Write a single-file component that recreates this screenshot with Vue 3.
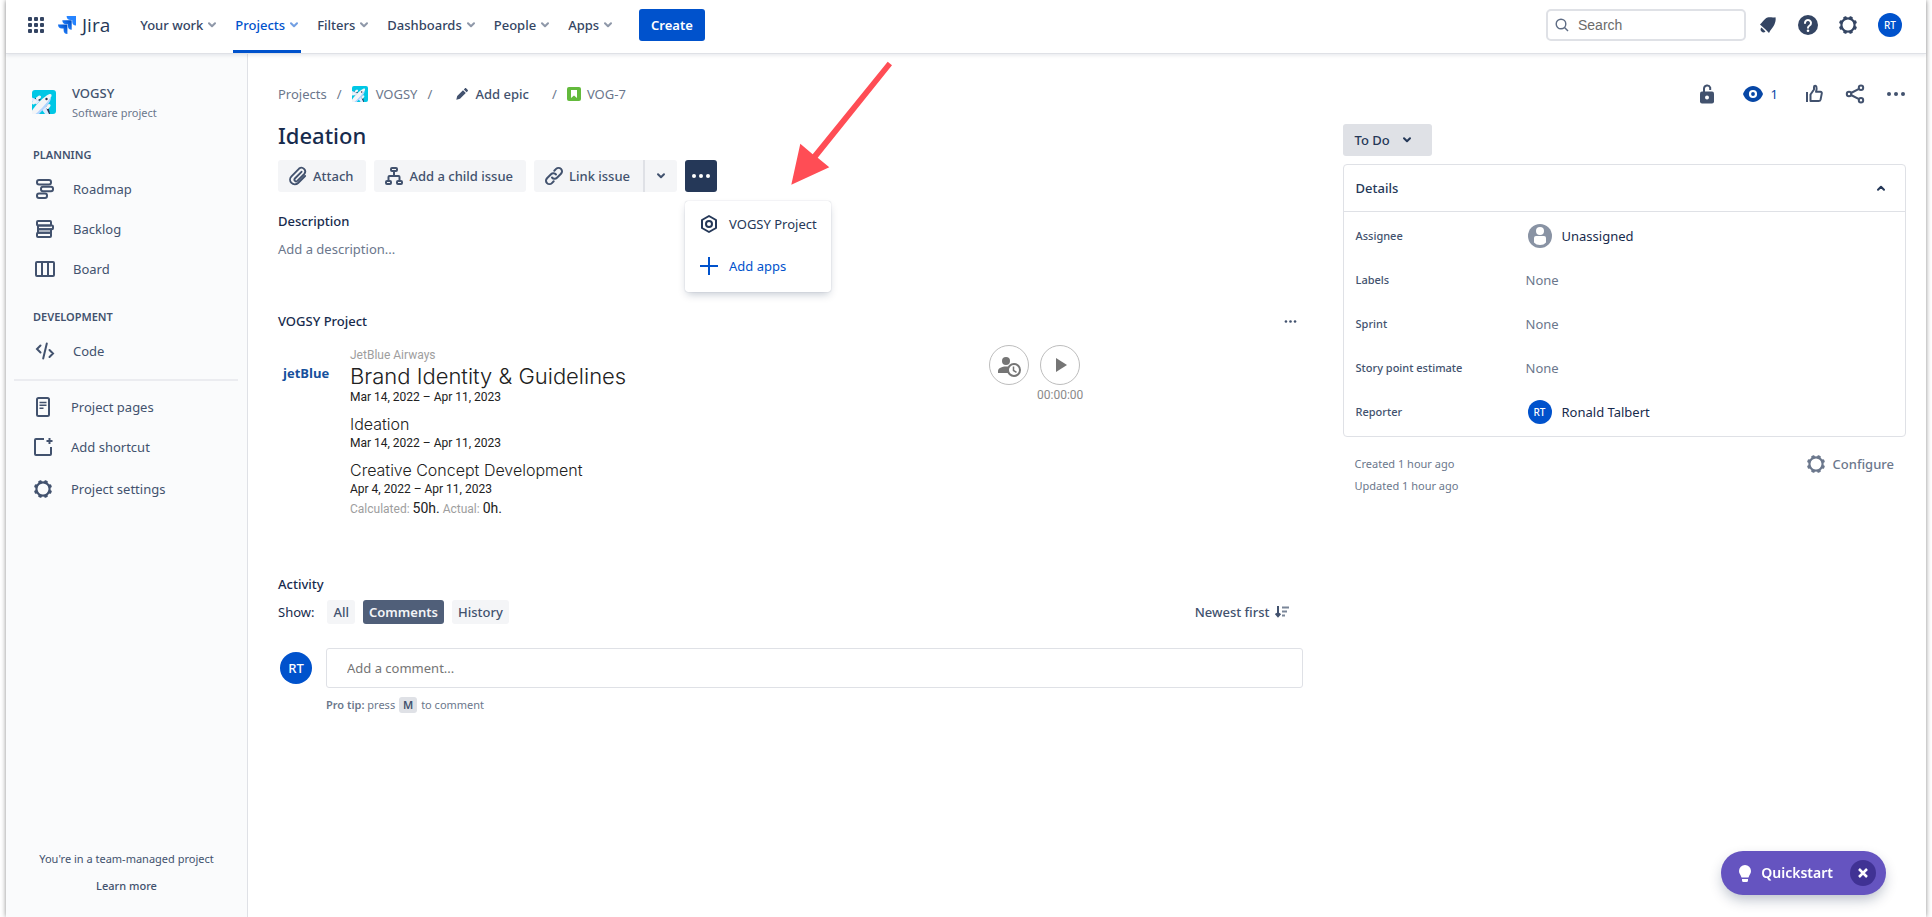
<script setup>
import { ref } from 'vue'

const navItems = ['Your work', 'Projects', 'Filters', 'Dashboards', 'People', 'Apps']
const planning = [
  { label: 'Roadmap', icon: 'roadmap' },
  { label: 'Backlog', icon: 'backlog' },
  { label: 'Board', icon: 'board' },
]
const shortcuts = [
  { label: 'Project pages', icon: 'page' },
  { label: 'Add shortcut', icon: 'shortcut' },
  { label: 'Project settings', icon: 'gear' },
]
const filters = ['All', 'Comments', 'History']
const activeFilter = ref('Comments')
const comment = ref('')
const query = ref('')
</script>

<template>
  <svg class="defs" width="0" height="0" aria-hidden="true">
    <defs>
      <symbol id="i-chevron" viewBox="0 0 10 8">
        <path d="M2 2.2 5 5.2 8 2.2" fill="none" stroke="currentColor" stroke-width="2" stroke-linecap="round" stroke-linejoin="round" />
      </symbol>
      <symbol id="i-plane" viewBox="0 0 24 24">
        <rect width="24" height="24" rx="3" fill="#00c7e5" />
        <path d="M12 19l4-4 2 9h-3z M3 8l6 1.500-5 5z" fill="#253858" />
        <path d="M0 7.500 8 11l-3.500 3.500L0 11.500z M13 15.500 17 24h-4l-3.500-5z" fill="#deebff" />
        <path d="M0 20.500C4 14.500 12 6.500 17 4.200c2-.9 3.200.2 2.300 2.300C17 11.500 9.500 20 5 24H0z" fill="#f4f5f7" />
        <path d="M3.500 24C9 19.500 16 12 19 6.800c.3 3.200-1.500 6-4.200 9L7 24z" fill="#b3d4ff" />
        <path d="M5.500 8.500 7.500 7M1.500 13l1.500-1.500M15.500 17.500l1.500-2" stroke="#f4f5f7" stroke-width="3" stroke-linecap="round" />
        <circle cx="14.500" cy="9" r="1.200" fill="#253858" />
      </symbol>
      <symbol id="i-gear" viewBox="0 0 20 20">
        <circle cx="10" cy="10" r="6.600" fill="none" stroke="currentColor" stroke-width="2.200" />
        <g fill="currentColor">
          <rect v-for="a in 8" :key="a" x="8.200" y="0.900" width="3.600" height="3.200" rx="1" :transform="`rotate(${a * 45 - 22.5} 10 10)`" />
        </g>
      </symbol>
      <symbol id="i-roadmap" viewBox="0 0 20 20">
        <g fill="none" stroke="currentColor" stroke-width="2">
          <rect x="2" y="1" width="14" height="4.500" rx="2" />
          <rect x="6" y="7.700" width="12" height="4.500" rx="2" />
          <rect x="2" y="14.400" width="10" height="4.500" rx="2" />
        </g>
      </symbol>
      <symbol id="i-backlog" viewBox="0 0 20 20">
        <g fill="none" stroke="currentColor" stroke-width="2">
          <rect x="2" y="2" width="14" height="4.500" rx="1" />
          <path d="M3 6.500h14a1 1 0 0 1 1 1v1.800a1 1 0 0 1-1 1H3z" />
          <path d="M3 10.300h13v3.400H3z" />
          <rect x="2" y="13.700" width="14" height="4.300" rx="1" />
        </g>
      </symbol>
      <symbol id="i-board" viewBox="0 0 20 20">
        <path d="M2 3h16a1 1 0 0 1 1 1v12a1 1 0 0 1-1 1H2a1 1 0 0 1-1-1V4a1 1 0 0 1 1-1zM7 3v14M13 3v14" fill="none" stroke="currentColor" stroke-width="2" />
      </symbol>
      <symbol id="i-page" viewBox="0 0 20 20">
        <rect x="4" y="1" width="12" height="18" rx="1.500" fill="none" stroke="currentColor" stroke-width="2" />
        <path d="M6.500 5.500h7M6.500 8.300h7M6.500 11.200h4" stroke="currentColor" stroke-width="1.600" />
      </symbol>
      <symbol id="i-shortcut" viewBox="0 0 20 20">
        <path d="M11 2H3a1 1 0 0 0-1 1v14a1 1 0 0 0 1 1h14a1 1 0 0 0 1-1V10M16.500 1v6M13.500 4h6" fill="none" stroke="currentColor" stroke-width="2" />
      </symbol>
      <symbol id="i-dots" viewBox="0 0 20 20">
        <g fill="currentColor"><circle cx="3" cy="10" r="2" /><circle cx="10" cy="10" r="2" /><circle cx="17" cy="10" r="2" /></g>
      </symbol>
    </defs>
  </svg>

  <div class="frame">
    <header class="topbar">
      <button class="icon-btn switcher" aria-label="App switcher">
        <svg width="16" height="16" viewBox="0 0 16 16" fill="#344563">
          <template v-for="r in 3" :key="r">
            <rect v-for="c in 3" :key="c" :x="(c - 1) * 6" :y="(r - 1) * 6" width="4" height="4" rx="1" />
          </template>
        </svg>
      </button>
      <a class="brand" href="#">
        <svg width="18" height="18" viewBox="0 0 18 18" aria-hidden="true">
          <defs>
            <linearGradient id="jg" x1="1" y1="0" x2="0.300" y2="0.700"><stop offset="0.200" stop-color="#0052cc" /><stop offset="1" stop-color="#2684ff" /></linearGradient>
          </defs>
          <path d="M8.600 0H18v9.500a4 4 0 0 1-3.800-4V3.900h-1.600A4 4 0 0 1 8.600 0z" fill="#2684ff" />
          <path d="M4.300 4.300h9.400v9.500a4 4 0 0 1-3.800-4V8.200H8.300a4 4 0 0 1-4-3.900z" fill="url(#jg)" />
          <path d="M0 8.600h9.400V18a4 4 0 0 1-3.800-4v-1.500H4a4 4 0 0 1-4-3.900z" fill="url(#jg)" />
        </svg>
        <span>Jira</span>
      </a>
      <nav class="nav" aria-label="Primary">
        <a v-for="item in navItems" :key="item" href="#" class="nav-item" :class="{ active: item === 'Projects' }">
          {{ item }}<svg width="10" height="8"><use href="#i-chevron" /></svg>
        </a>
      </nav>
      <button class="create">Create</button>
      <label class="search">
        <svg width="14" height="14" viewBox="0 0 14 14" fill="none" stroke="#5e6c84" stroke-width="1.400"><circle cx="6" cy="6" r="4.800" /><path d="m9.500 9.500 3.500 3.500" /></svg>
        <input v-model="query" type="search" placeholder="Search" aria-label="Search" />
      </label>
      <div class="tools">
        <button class="icon-btn" aria-label="Notifications">
          <svg width="20" height="20" viewBox="0 0 20 20" fill="#344563"><path d="M2 9.400C4 8.500 6 3.700 9.500 2.600 12 1.900 14.500 3 17.500 2.200c.6 3-.3 5.200-1.200 7.600-1.200 3-4 5-5.300 8.200L7.600 14.500z" /><path d="M3.500 12.500 7.500 16.500A2.600 2.600 0 0 1 3.500 12.500z" /></svg>
        </button>
        <button class="icon-btn" aria-label="Help">
          <svg width="20" height="20" viewBox="0 0 20 20"><circle cx="10" cy="10" r="10" fill="#344563" /><path d="M7 8a3 3 0 1 1 4.600 2.500C10.400 11.200 10 11.600 10 12.700" fill="none" stroke="#fff" stroke-width="2" stroke-linecap="round" /><circle cx="10" cy="15.700" r="1.300" fill="#fff" /></svg>
        </button>
        <button class="icon-btn dark" aria-label="Settings"><svg width="20" height="20"><use href="#i-gear" /></svg></button>
        <button class="avatar" aria-label="Your profile">RT</button>
      </div>
    </header>

    <div class="body">
      <aside class="sidebar">
        <div class="project">
          <svg width="24" height="24"><use href="#i-plane" /></svg>
          <div>
            <strong>VOGSY</strong>
            <span>Software project</span>
          </div>
        </div>
        <h2>Planning</h2>
        <nav class="side-nav" aria-label="Planning">
          <a v-for="p in planning" :key="p.label" href="#"><svg width="20" height="20"><use :href="'#i-' + p.icon" /></svg>{{ p.label }}</a>
        </nav>
        <h2 class="second">Development</h2>
        <nav class="side-nav" aria-label="Development">
          <a href="#">
            <svg width="20" height="20" viewBox="0 0 20 20" fill="none" stroke="currentColor" stroke-width="2" stroke-linecap="round"><path d="M5.500 4.500 2 8l3.500 3.500M11.800 2.500 8.200 17.500M14.500 9 18 12.500 14.500 16" /></svg>Code
          </a>
        </nav>
        <hr />
        <nav class="side-nav lower" aria-label="Shortcuts">
          <a v-for="s in shortcuts" :key="s.label" href="#"><svg width="20" height="20"><use :href="'#i-' + s.icon" /></svg>{{ s.label }}</a>
        </nav>
        <footer>
          <p>You're in a team-managed project</p>
          <a href="#">Learn more</a>
        </footer>
      </aside>

      <main>
        <div class="page-bar">
          <nav class="crumbs" aria-label="Breadcrumb">
            <a href="#">Projects</a><i>/</i>
            <a href="#" class="with-icon"><svg width="16" height="16"><use href="#i-plane" /></svg>VOGSY</a><i>/</i>
            <button class="epic">
              <svg width="12" height="12" viewBox="0 0 12 12" fill="#42526e"><path d="M0.300 11.700 1.200 8 7 2.200 9.800 5 4 10.800zM7.800 1.400 8.800.4c.5-.5 1-.5 1.500 0L11.600 1.700c.5.500.5 1 0 1.500l-1 1z" /></svg>Add epic
            </button><i>/</i>
            <a href="#" class="key"><svg width="14" height="14" viewBox="0 0 14 14"><rect width="14" height="14" rx="2" fill="#63ba3c" /><path d="M4 3h6v8L7 8.500 4 11z" fill="#fff" /></svg>VOG-7</a>
          </nav>
          <div class="page-tools">
            <button class="icon-btn" aria-label="Restrictions">
              <svg width="20" height="20" viewBox="0 0 20 20"><rect x="3" y="7.500" width="14" height="12" rx="2" fill="currentColor" /><path d="M7 8V4.500a3.200 3.200 0 0 1 6.200-.9V6" fill="none" stroke="currentColor" stroke-width="2" /><circle cx="10" cy="13.500" r="2" fill="#fff" /></svg>
            </button>
            <button class="icon-btn watch">
              <svg width="20" height="20" viewBox="0 0 20 20"><path d="M10 2c5 0 8.500 3.700 10 8-1.500 4.300-5 8-10 8S1.500 14.300 0 10c1.500-4.300 5-8 10-8z" fill="currentColor" /><circle cx="10" cy="10" r="3" fill="none" stroke="#fff" stroke-width="2.200" /></svg>1
            </button>
            <button class="icon-btn" aria-label="Vote">
              <svg width="20" height="20" viewBox="0 0 20 20" fill="none" stroke="currentColor" stroke-width="2"><path d="M3 8v10" /><path d="M6.500 17V10.500L10 5.500V3a1.200 1.200 0 0 1 2.400 0c.6 1.600.3 3-.4 4.800h4.500c1 0 1.500.7 1.300 1.600l-1.200 6c-.3 1.100-.9 1.600-2 1.600z" stroke-linejoin="round" /></svg>
            </button>
            <button class="icon-btn" aria-label="Share">
              <svg width="20" height="20" viewBox="0 0 20 20" fill="none" stroke="currentColor" stroke-width="2"><circle cx="4" cy="10" r="2.200" /><circle cx="16" cy="3.700" r="2.200" /><circle cx="16" cy="16.300" r="2.200" /><path d="M6 9 14 4.800M6 11l8 4.200" /></svg>
            </button>
            <button class="icon-btn" aria-label="More actions"><svg width="20" height="20"><use href="#i-dots" /></svg></button>
          </div>
        </div>

        <div class="columns">
          <section class="issue">
            <h1>Ideation</h1>
            <div class="actions">
              <button class="btn">
                <svg width="20" height="20" viewBox="0 0 20 20" fill="none" stroke="currentColor" stroke-width="1.900" stroke-linecap="round"><path d="m13.500 5.800-6.600 6.700a1.700 1.700 0 0 0 2.400 2.400l7-7.100a3.700 3.700 0 0 0-5.200-5.200L3.500 10.300a4.700 4.700 0 0 0 6.600 6.700l7-7" /></svg>Attach
              </button>
              <button class="btn">
                <svg width="20" height="20" viewBox="0 0 20 20" fill="none" stroke="currentColor" stroke-width="2"><rect x="7" y="2" width="6" height="3" rx="1" /><path d="M10 5v5M4.500 15v-4a1 1 0 0 1 1-1h9a1 1 0 0 1 1 1v4" /><rect x="2" y="15" width="5" height="3" rx="1" /><rect x="13" y="15" width="5" height="3" rx="1" /></svg>Add a child issue
              </button>
              <div class="split">
                <button class="btn">
                  <svg width="20" height="20" viewBox="0 0 20 20" fill="none" stroke="currentColor" stroke-width="2" stroke-linecap="round"><path d="M8 11.500a3.400 3.400 0 0 0 5 .3l4-4a3.400 3.400 0 0 0-4.900-4.900L10.300 4.700M12 8.500a3.400 3.400 0 0 0-5-.3l-4 4a3.400 3.400 0 0 0 4.900 4.900l1.800-1.800" /></svg>Link issue
                </button>
                <button class="btn arrow" aria-label="Link options"><svg width="10" height="8"><use href="#i-chevron" /></svg></button>
              </div>
              <div class="more">
                <button class="more-btn" aria-label="More" aria-expanded="true"><svg width="20" height="20"><use href="#i-dots" /></svg></button>
                <div class="menu" role="menu">
                  <a href="#" role="menuitem">
                    <svg width="20" height="20" viewBox="0 0 20 20" fill="none" stroke="currentColor" stroke-width="2" stroke-linejoin="round"><path d="M10 2 17 6v8l-7 4-7-4V6z" /><circle cx="10" cy="10" r="3" /></svg>VOGSY Project
                  </a>
                  <a href="#" role="menuitem" class="blue">
                    <svg width="20" height="20" viewBox="0 0 20 20" stroke="currentColor" stroke-width="2"><path d="M10 1v18M1 10h18" /></svg>Add apps
                  </a>
                </div>
                <svg class="pointer" width="104" height="126" viewBox="0 0 104 126" fill="#ff4d55" aria-hidden="true"><path d="M97.700.7 102 4.300 27.700 96.700l11.600 9.600L1.300 123.700l9-41 12.400 10.600z" /></svg>
              </div>
            </div>

            <h3 class="desc-title">Description</h3>
            <p class="desc">Add a description...</p>

            <div class="panel-head">
              <h3>VOGSY Project</h3>
              <button class="icon-btn" aria-label="Panel menu"><svg width="13" height="13"><use href="#i-dots" /></svg></button>
            </div>
            <div class="vogsy">
              <div class="client-logo">jetBlue</div>
              <div class="plan">
                <p class="client">JetBlue Airways</p>
                <p class="big">Brand Identity &amp; Guidelines</p>
                <p class="dates">Mar 14, 2022 – Apr 11, 2023</p>
                <p class="mid">Ideation</p>
                <p class="dates">Mar 14, 2022 – Apr 11, 2023</p>
                <p class="mid">Creative Concept Development</p>
                <p class="dates">Apr 4, 2022 – Apr 11, 2023</p>
                <p class="hours">Calculated: <b>50h.</b> Actual: <b>0h.</b></p>
              </div>
              <div class="timer">
                <button class="round" aria-label="Log time">
                  <svg width="24" height="24" viewBox="0 0 24 24"><circle cx="9" cy="8" r="4" fill="#757575" /><path d="M1 20v-2c0-3 4-4.500 8-4.500 2 0 4 .3 5 1V20z" fill="#757575" /><circle cx="17" cy="17" r="6" fill="#fff" stroke="#757575" stroke-width="2" /><path d="M16.500 13.500V17.500l3 1.800" fill="none" stroke="#757575" stroke-width="1.500" /></svg>
                </button>
                <div class="play">
                  <button class="round" aria-label="Start timer"><svg width="24" height="24" viewBox="0 0 24 24"><path d="M8 5v14l11-7z" fill="#757575" /></svg></button>
                  <span>00:00:00</span>
                </div>
              </div>
            </div>

            <h3 class="activity">Activity</h3>
            <div class="show">
              <span>Show:</span>
              <button v-for="f in filters" :key="f" :class="{ on: f === activeFilter }" @click="activeFilter = f">{{ f }}</button>
              <button class="sort">Newest first
                <svg width="16" height="14" viewBox="0 0 16 14" fill="none" stroke="currentColor" stroke-width="2"><path d="M3 1v10M.7 8.500 3 11.200l2.300-2.700" /><path d="M7 2.500h7M7 6.500h5M7 10.500h3" opacity="0.700" /></svg>
              </button>
            </div>
            <div class="composer">
              <span class="avatar large">RT</span>
              <div class="field">
                <input v-model="comment" type="text" placeholder="Add a comment..." aria-label="Add a comment" />
                <p><strong>Pro tip:</strong> press <kbd>M</kbd> to comment</p>
              </div>
            </div>
          </section>

          <section class="side">
            <button class="status">To Do<svg width="10" height="8"><use href="#i-chevron" /></svg></button>
            <div class="card">
              <button class="card-head" aria-expanded="true">Details<svg class="up" width="10" height="8"><use href="#i-chevron" /></svg></button>
              <dl>
                <dt>Assignee</dt>
                <dd class="person"><svg width="24" height="24" viewBox="0 0 24 24"><circle cx="12" cy="12" r="12" fill="#8993a4" /><circle cx="12" cy="7" r="4" fill="#fff" /><path d="M6 14a2 2 0 0 1 2-2h8a2 2 0 0 1 2 2v4.500c-1.500 1.700-3.500 2.500-6 2.500s-4.500-.8-6-2.500z" fill="#fff" /></svg>Unassigned</dd>
                <dt>Labels</dt><dd>None</dd>
                <dt>Sprint</dt><dd>None</dd>
                <dt>Story point estimate</dt><dd>None</dd>
                <dt>Reporter</dt>
                <dd class="person"><span class="avatar">RT</span>Ronald Talbert</dd>
              </dl>
            </div>
            <div class="meta">
              <div><p>Created 1 hour ago</p><p>Updated 1 hour ago</p></div>
              <button class="configure"><svg width="20" height="20"><use href="#i-gear" /></svg>Configure</button>
            </div>
          </section>
        </div>
      </main>
    </div>
  </div>

  <div class="quickstart">
    <button class="qs-open">
      <svg width="12" height="17" viewBox="0 0 12 17" fill="#fff"><path d="M6 0a6 6 0 0 1 6 6c0 2.500-1.500 3.600-2.500 6.500h-7C1.500 9.600 0 8.500 0 6a6 6 0 0 1 6-6zM3 14h6v1.500A1.500 1.500 0 0 1 7.500 17h-3A1.500 1.500 0 0 1 3 15.500z" /></svg>Quickstart
    </button>
    <button class="qs-close" aria-label="Close"><svg width="10" height="10" viewBox="0 0 10 10" stroke="#fff" stroke-width="2.500"><path d="m1 1 8 8M9 1 1 9" /></svg></button>
  </div>
</template>

<style>
body { background: #fff; }
</style>

<style scoped>
* { box-sizing: border-box; }
h1, h2, h3, p, dl, dd { margin: 0; }
button, input { font: inherit; color: inherit; border: 0; background: none; padding: 0; margin: 0; }
button { cursor: pointer; }
a { color: inherit; text-decoration: none; }
svg { flex: none; display: block; }
.defs { position: absolute; }

.frame {
  display: flex; flex-direction: column; min-height: 100vh; margin: 0 6px;
  font: 400 13px/20px "Noto Sans", "Open Sans", sans-serif; color: #172b4d;
  background: #fff; box-shadow: 0 0 5px rgba(0, 0, 0, 0.45);
}

.topbar {
  position: relative; display: flex; align-items: center; height: 54px; padding: 0 24px 3px 22px;
  border-bottom: 1px solid #dfe1e6; box-shadow: 0 2px 3px rgba(9, 30, 66, 0.08); color: #344563;
}
.icon-btn { display: flex; align-items: center; justify-content: center; color: #42526e; }
.icon-btn.dark { color: #344563; }
.brand { display: flex; align-items: center; gap: 6px; margin-left: 14px; font: 400 19px/24px "Open Sans", sans-serif; color: #253858; }
.nav { display: flex; align-self: stretch; gap: 14px; margin: 0 0 -3px 28px; }
.nav-item { display: flex; align-items: center; gap: 4px; padding: 0 2px 3px; font-weight: 500; }
.nav-item svg { opacity: 0.55; }
.nav-item.active { color: #0052cc; border-bottom: 3px solid #0052cc; padding-bottom: 0; }
.create { height: 32px; margin-left: 24px; padding: 0 12px; border-radius: 3px; background: #0052cc; color: #fff; font-weight: 600; }
.search { display: flex; align-items: center; gap: 9px; width: 200px; height: 32px; margin-left: auto; padding: 0 7px; border: 2px solid #dfe1e6; border-radius: 5px; }
.search input { flex: 1; min-width: 0; outline: 0; font: 14px/20px "Liberation Sans", Arial, sans-serif; }
.search input::placeholder { color: #6b6b6b; opacity: 1; }
.tools { display: flex; align-items: center; gap: 20px; margin-left: 12px; }
.avatar {
  display: inline-flex; align-items: center; justify-content: center; flex: none; width: 24px; height: 24px;
  border-radius: 50%; background: #0052cc; color: #fff; font-size: 10px; font-weight: 500; line-height: 1;
}
.avatar.large { width: 32px; height: 32px; margin: 4px 0 0 2px; font-size: 13px; }

.body { display: flex; flex: 1; }
.sidebar {
  display: flex; flex-direction: column; flex: none; width: 242px; padding: 29px 8px 21px;
  background: #fafbfc; border-right: 1px solid #dfe1e6; color: #42526e;
}
.project { display: flex; align-items: center; gap: 16px; padding-left: 18px; }
.project svg { margin-top: -2px; }
.project div { display: flex; flex-direction: column; }
.project strong { font-weight: 500; }
.project span { font-size: 11px; color: #6b778c; }
h2 { margin: 22px 0 0 19px; font: 600 11px/20px "Noto Sans", sans-serif; text-transform: uppercase; }
h2.second { margin-top: 18px; }
.side-nav { margin-top: 4px; }
.side-nav a { display: flex; align-items: center; gap: 18px; height: 40px; padding-left: 21px; }
hr { width: 224px; height: 2px; margin: 8px 0 0; border: 0; background: #ebecf0; }
.side-nav.lower { margin-top: 6px; }
.side-nav.lower a { padding-left: 19px; }
.side-nav.lower a:last-child { height: 44px; }
footer { margin-top: auto; text-align: center; font-size: 11px; }
footer a { display: block; margin-top: 7px; font-weight: 500; }

main { flex: 1; min-width: 0; padding: 28px 20px 0 30px; }
.page-bar { display: flex; justify-content: space-between; height: 24px; }
.crumbs { display: flex; align-items: center; color: #6b778c; }
.crumbs i { font-style: normal; width: 25px; text-align: center; }
.with-icon { display: flex; align-items: center; gap: 8px; }
.epic { display: flex; align-items: center; gap: 7px; margin: 0 13px 0 14px; font-weight: 500; color: #42526e; }
.key { display: flex; align-items: center; gap: 6px; }
.page-tools { display: flex; align-items: center; gap: 21px; }
.watch { gap: 8px; margin: 0 5px; color: #0747a6; }

.columns { display: grid; grid-template-columns: minmax(0, 20fr) minmax(0, 11fr); gap: 40px; margin-top: 16px; }
h1 { font: 500 22px/26px "Noto Sans", sans-serif; }
h3 { font: 500 13px/20px "Noto Sans", sans-serif; }
.actions { display: flex; gap: 8px; margin-top: 12px; }
.btn { display: flex; align-items: center; gap: 5px; height: 32px; padding: 0 13px 0 10px; border-radius: 3px; background: #f4f5f7; color: #42526e; font-weight: 500; }
.split { display: flex; }
.split .btn:first-child { border-radius: 3px 0 0 3px; border-right: 2px solid #dfe1e6; }
.split .arrow { width: 32px; padding: 0; justify-content: center; border-radius: 0 3px 3px 0; }
.more { position: relative; }
.more-btn { display: flex; align-items: center; justify-content: center; width: 32px; height: 32px; border-radius: 3px; background: #253858; color: #fff; }
.menu {
  position: absolute; z-index: 2; top: 41px; left: 0; width: 146px; padding: 2px 0 5px; border-radius: 3px; background: #fff;
  box-shadow: 0 4px 8px -2px rgba(9, 30, 66, 0.25), 0 0 1px rgba(9, 30, 66, 0.31);
}
.menu a { display: flex; align-items: center; gap: 10px; height: 42px; padding-left: 14px; white-space: nowrap; color: #253858; }
.menu a.blue { color: #0052cc; }
.pointer { position: absolute; z-index: 3; left: 105px; top: -99px; pointer-events: none; }

.desc-title { margin-top: 19px; }
.desc { margin-top: 8px; color: #6b778c; }
.panel-head { display: flex; justify-content: space-between; margin-top: 52px; padding-right: 6px; }
.vogsy { display: flex; margin-top: 14px; font-family: Roboto, sans-serif; }
.client-logo { width: 72px; padding: 18px 0 0 5px; font: 700 13px/20px "Open Sans", sans-serif; color: #15509c; }
.plan { width: 639px; font-size: 12px; line-height: 16px; color: #212121; }
.client { padding-top: 2px; color: #9e9e9e; }
.big { font: 300 22px/26px Inter, sans-serif; }
.mid { margin-top: 9px; font: 300 16px/21px Inter, sans-serif; }
.hours { margin-top: 3px; color: #9e9e9e; }
.hours b { font-size: 14px; font-weight: 400; color: #212121; }
.timer { display: flex; align-items: flex-start; gap: 8px; }
.round { display: flex; align-items: center; justify-content: center; width: 40px; height: 40px; border: 1px solid #bdbdbd; border-radius: 50%; }
.play { display: flex; flex-direction: column; align-items: center; font-size: 12px; color: #8a8a8a; }

.activity { margin-top: 57px; }
.show { display: flex; align-items: center; gap: 8px; margin-top: 6px; }
.show span { margin-right: 5px; }
.show button { height: 24px; padding: 0 6px; border-radius: 3px; background: #f4f5f7; color: #42526e; font-weight: 500; }
.show button.on { background: #505f79; color: #f4f5f7; font-weight: 600; }
.show .sort { display: flex; align-items: center; gap: 5px; margin-left: auto; padding-right: 12px; background: none; }
.composer { display: flex; gap: 14px; margin-top: 24px; }
.field { flex: 1; min-width: 0; }
.field input { display: block; width: 100%; height: 40px; padding: 0 20px; border: 1px solid #dfe1e6; border-radius: 3px; outline: 0; }
.field input::placeholder { color: #757575; opacity: 1; }
.field p { margin-top: 7px; font-size: 11px; color: #6b778c; }
.field strong { font-weight: 600; }
kbd { display: inline-block; margin: 0 1px; padding: 0 4px; border-radius: 3px; background: #dfe1e6; color: #42526e; font: 600 11px/16px "Noto Sans", sans-serif; }

.side { padding-top: 2px; }
.status { display: flex; align-items: center; gap: 12px; height: 32px; padding: 0 20px 0 12px; border-radius: 3px; background: #dfe1e6; color: #253858; font-weight: 500; }
.card { margin-top: 8px; border: 1px solid #dfe1e6; border-radius: 4px; }
.card-head { display: flex; align-items: center; justify-content: space-between; width: 100%; height: 47px; padding: 0 19px 0 12px; border-bottom: 1px solid #dfe1e6; font-weight: 500; color: #253858; }
.up { transform: rotate(180deg); }
dl { display: grid; grid-template-columns: 170px minmax(0, 1fr); grid-auto-rows: 44px; align-items: center; padding: 2px 12px; }
dt { font-size: 11px; font-weight: 500; color: #42526e; }
dd { color: #6b778c; }
dd.person { display: flex; align-items: center; gap: 10px; padding-left: 2px; color: #172b4d; }
.meta { display: flex; justify-content: space-between; align-items: flex-start; padding: 16px 12px 0; color: #6b778c; font-size: 11px; line-height: 22px; }
.configure { display: flex; align-items: center; gap: 7px; font-size: 13px; font-weight: 500; }

.quickstart {
  position: fixed; right: 46px; bottom: 22px; display: flex; align-items: center; gap: 17px; height: 44px; padding: 0 10px 0 18px;
  border-radius: 22px; background: #6554c0; box-shadow: 0 6px 14px -2px rgba(9, 30, 66, 0.3); color: #fff;
}
.qs-open { display: flex; align-items: center; gap: 10px; font: 600 14px/20px "Noto Sans", sans-serif; }
.qs-close { display: flex; align-items: center; justify-content: center; width: 26px; height: 26px; border-radius: 50%; background: #403294; }
</style>
